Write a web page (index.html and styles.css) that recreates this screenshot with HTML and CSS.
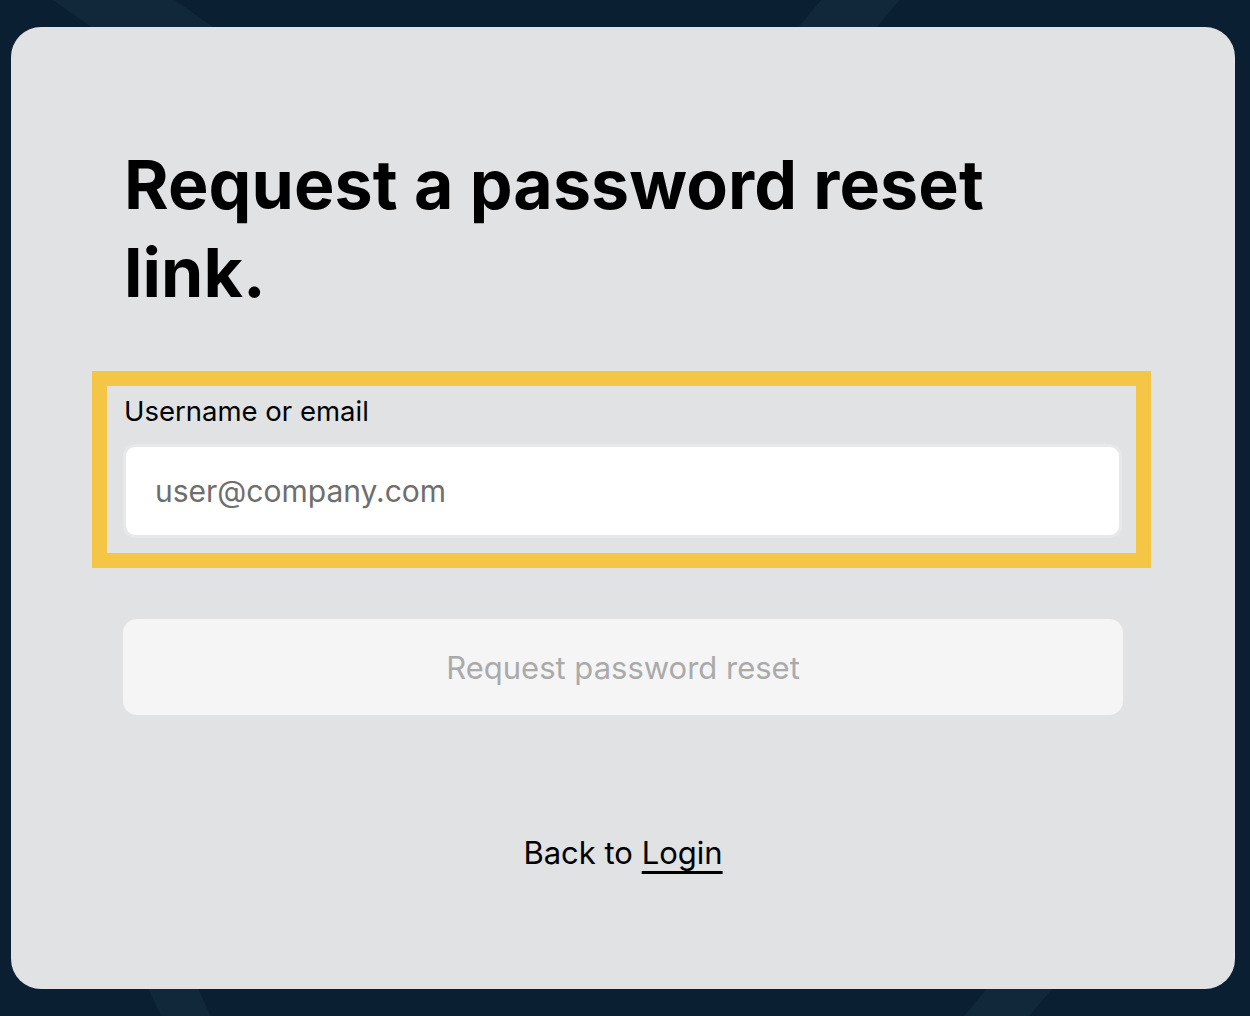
FILE: index.html
```html
<!DOCTYPE html>
<html lang="en">
<head>
  <meta charset="UTF-8" />
  <title>Request a password reset link</title>
  <link rel="stylesheet" href="styles.css">
</head>
<body>

<div class="backdrop">
  <span class="band band-1"></span>
  <span class="band band-2"></span>
  <span class="band band-3"></span>
  <span class="band band-4"></span>
</div>

<div class="card">
  <div class="form">
    <h1 class="title">Request a password reset link.</h1>

    <div class="field-highlight">
      <label class="field-label" for="username">Username or email</label>
      <input id="username" class="field-input" placeholder="user@company.com" />
    </div>

    <button class="submit-btn" disabled>Request password reset</button>

    <p class="back-link">Back to <a href="#">Login</a></p>
  </div>
</div>

</body>
</html>
```

FILE: styles.css
```css
body {
  margin: 0;
  padding: 27px 15px 27px 11px;
  background: #0b1f33;
  font-family: Inter, "Noto Sans", sans-serif;
  overflow: hidden;
  height: 962px;
}

.backdrop {
  position: fixed;
  top: 0; left: 0;
  width: 100%; height: 100%;
  overflow: hidden;
}

.band {
  position: absolute;
  background: #112b3b;
  opacity: 0.8;
}

.band-1 { left: 150px; top: -200px; width: 70px; height: 500px; transform: rotate(-55deg); }
.band-2 { left: 780px; top: -60px; width: 60px; height: 240px; transform: rotate(40deg); }
.band-3 { left: 170px; top: 930px; width: 45px; height: 200px; transform: rotate(-25deg); }
.band-4 { left: 960px; top: 930px; width: 50px; height: 200px; transform: rotate(40deg); }

.card {
  position: relative;
  height: 962px;
  background: #e1e2e4;
  border-radius: 30px;
  box-sizing: border-box;
  padding-top: 113px;
}

.form {
  width: 1000px;
  margin: 0 auto;
  display: flex;
  flex-direction: column;
}

.title {
  margin: 0 0 55px 1px;
  font-size: 68px;
  line-height: 88px;
  font-weight: 700;
  letter-spacing: 0.1px;
  color: #000;
  max-width: 900px;
}

.field-highlight {
  margin: 0 -28px 0 -31px;
  border: 15px solid #f5c645;
  padding: 7px 14px 15px 16px;
  display: flex;
  flex-direction: column;
}

.field-label {
  font-size: 27.5px;
  line-height: 36px;
  color: #000;
  margin-left: 1px;
  margin-bottom: 15px;
}

.field-input {
  height: 94px;
  box-sizing: border-box;
  border: 3px solid #e7e8e9;
  border-radius: 12px;
  background: #fff;
  padding: 0 29px;
  font-family: inherit;
  font-size: 30px;
  color: #000;
  outline: none;
}

.field-input::placeholder {
  color: #6e6e6e;
}

.submit-btn {
  margin-top: 51px;
  height: 96px;
  border: none;
  border-radius: 14px;
  background: #f5f5f5;
  color: #aaaaaa;
  font-family: inherit;
  font-size: 31px;
}

.back-link {
  margin: 120px 0 0;
  text-align: center;
  font-size: 31px;
  line-height: 36px;
  color: #000;
}

.back-link a {
  color: #000;
  text-decoration: underline;
  text-decoration-thickness: 3px;
  text-decoration-skip-ink: none;
  text-underline-offset: 7px;
}
```
